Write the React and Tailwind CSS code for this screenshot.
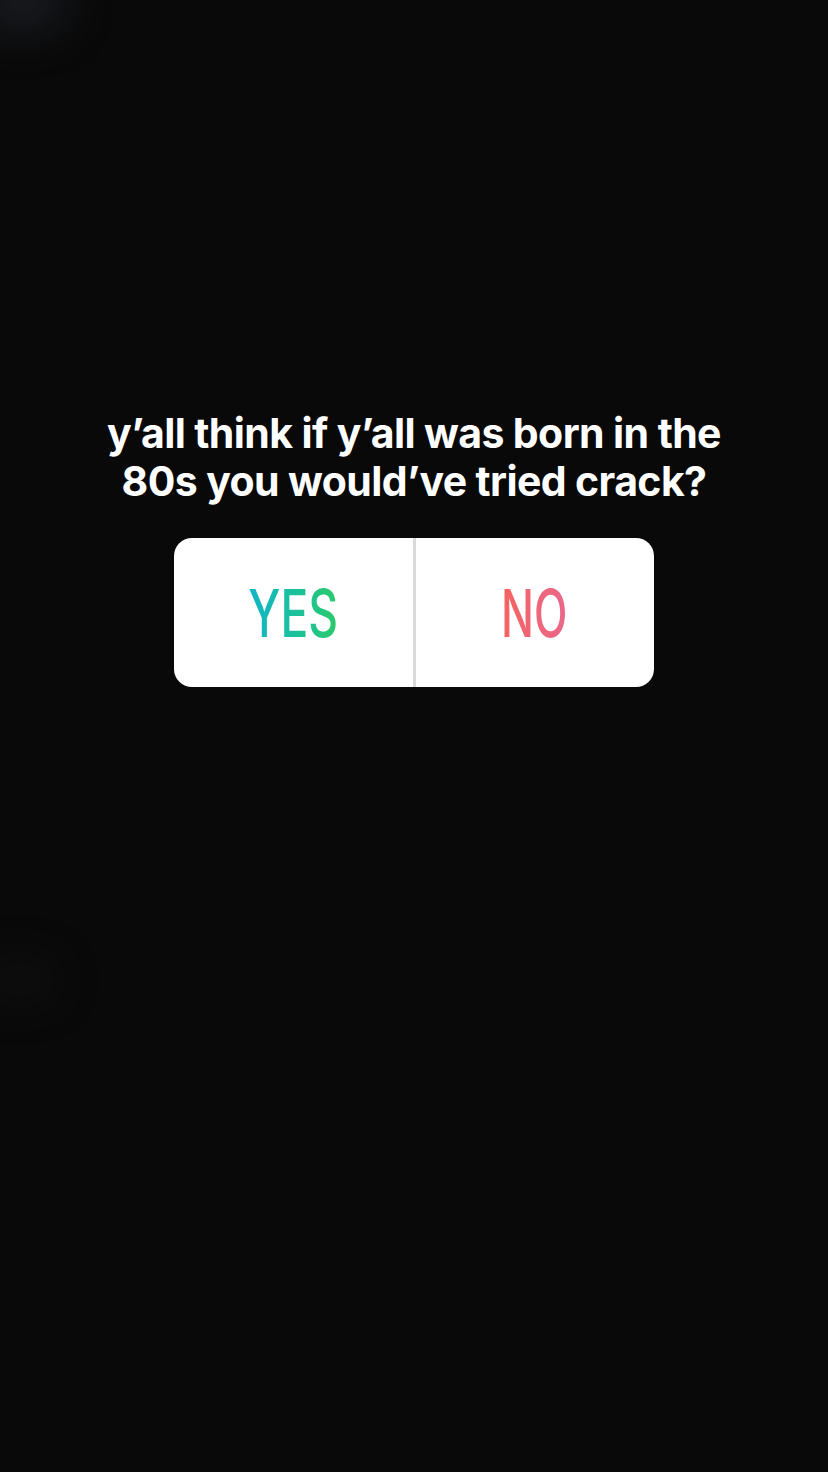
/**
 * App.jsx — story poll sticker on a dark photo.
 */
export default function App() {
    return (
        <div className="relative w-[828px] h-[1472px] overflow-hidden bg-[#090909]">
            {/* faint light leaks from the photo */}
            <div className="absolute -left-6 -top-6 w-[90px] h-[50px] rounded-full bg-[#3a4150]/40 blur-xl" />
            <div className="absolute -left-4 top-[965px] w-[70px] h-[30px] rounded-full bg-[#2a2a2a]/25 blur-xl" />

            <div className="relative flex flex-col items-center pt-[409px]">
                <p
                    className="text-center text-white font-bold text-[41px] leading-[48px] tracking-[-0.6px]"
                    style={{ fontFamily: 'Inter, "Liberation Sans", sans-serif' }}
                >
                    y’all think if y’all was born in the
                    <br />
                    80s you would’ve tried crack?
                </p>

                <div className="mt-[33px] flex w-[480px] h-[149px] rounded-[18px] bg-white overflow-hidden">
                    <div className="flex-1 flex items-center justify-center">
                        <span
                            className="inline-block scale-x-[0.7] text-[66px] font-medium leading-none bg-linear-to-r from-[#14b4c8] to-[#2bc96a] bg-clip-text text-transparent"
                            style={{ fontFamily: 'Inter, "Liberation Sans", sans-serif' }}
                        >
                            YES
                        </span>
                    </div>
                    <div className="w-[3px] bg-[#d9d9d9]" />
                    <div className="flex-1 flex items-center justify-center">
                        <span
                            className="inline-block scale-x-[0.66] text-[66px] font-medium leading-none bg-linear-to-r from-[#f66360] to-[#e9678a] bg-clip-text text-transparent"
                            style={{ fontFamily: 'Inter, "Liberation Sans", sans-serif' }}
                        >
                            NO
                        </span>
                    </div>
                </div>
            </div>
        </div>
    );
}
